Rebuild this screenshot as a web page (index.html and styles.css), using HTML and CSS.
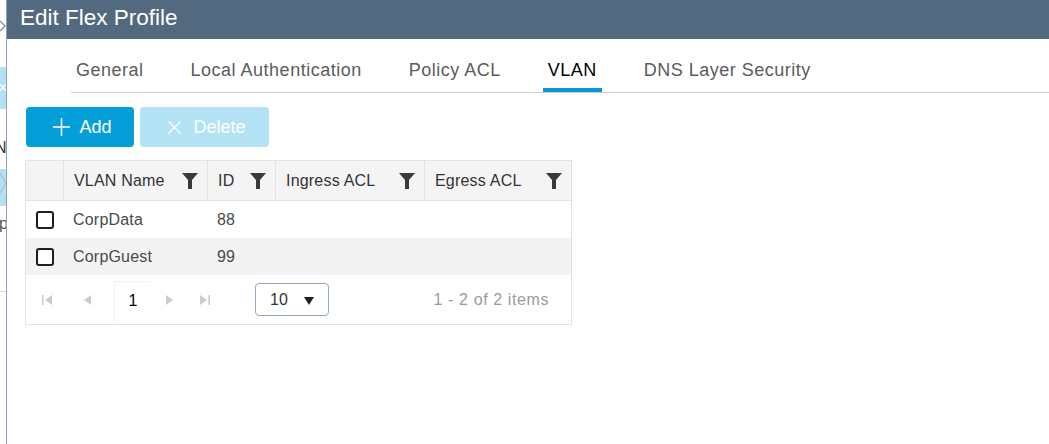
FILE: index.html
```html
<!DOCTYPE html>
<html lang="en">
<head>
<meta charset="utf-8">
<title>Edit Flex Profile</title>
<link rel="stylesheet" href="styles.css">
</head>
<body>
<div class="screen">
  <aside class="backdrop">
    <svg class="bd-chev" width="6" height="12" viewBox="0 0 6 12"><polyline points="0,1 5,6 0,11" fill="none" stroke="#8596ad" stroke-width="1.5"/></svg>
    <div class="bd-box bd-box1"><svg width="6" height="8" viewBox="0 0 6 8"><path d="M0 0 L6 7 M6 0 L0 7" stroke="#fff" stroke-width="1.2" fill="none"/></svg></div>
    <div class="bd-n">N</div>
    <div class="bd-box bd-box2"><svg width="6" height="37" viewBox="0 0 6 37"><polyline points="0,4 6,14 0,24" fill="none" stroke="#a9bccb" stroke-width="1.2"/></svg></div>
    <div class="bd-p">p</div>
    <div class="bd-line"></div>
  </aside>

  <main class="modal">
    <header class="modal-head">Edit Flex Profile</header>
    <div class="modal-body">
      <nav class="tabs">
        <span class="tab">General</span>
        <span class="tab">Local Authentication</span>
        <span class="tab">Policy ACL</span>
        <span class="tab tab-active">VLAN</span>
        <span class="tab">DNS Layer Security</span>
      </nav>

      <div class="toolbar">
        <button class="btn btn-add" type="button">
          <svg class="btn-icon-plus" width="17" height="18" viewBox="0 0 17 18"><path d="M8.5 0 V18 M0 9 H17" stroke="#fff" stroke-width="1.5" fill="none"/></svg>
          <span>Add</span>
        </button>
        <button class="btn btn-delete" type="button">
          <svg class="btn-icon-x" width="13" height="13" viewBox="0 0 13 13"><path d="M0.5 0.5 L12.5 12.5 M12.5 0.5 L0.5 12.5" stroke="#fff" stroke-width="1.4" fill="none"/></svg>
          <span>Delete</span>
        </button>
      </div>

      <div class="grid">
        <div class="grid-row grid-head">
          <div class="cell cell-check"></div>
          <div class="cell"><span>VLAN Name</span><svg class="funnel" width="16" height="16" viewBox="0 0 16 16"><polygon points="0,0 16,0 10,7 10,16 6,16 6,7"/></svg></div>
          <div class="cell"><span>ID</span><svg class="funnel" width="16" height="16" viewBox="0 0 16 16"><polygon points="0,0 16,0 10,7 10,16 6,16 6,7"/></svg></div>
          <div class="cell"><span>Ingress ACL</span><svg class="funnel" width="16" height="16" viewBox="0 0 16 16"><polygon points="0,0 16,0 10,7 10,16 6,16 6,7"/></svg></div>
          <div class="cell"><span>Egress ACL</span><svg class="funnel" width="16" height="16" viewBox="0 0 16 16"><polygon points="0,0 16,0 10,7 10,16 6,16 6,7"/></svg></div>
        </div>
        <div class="grid-row">
          <div class="cell cell-check"><span class="checkbox"></span></div>
          <div class="cell">CorpData</div>
          <div class="cell">88</div>
          <div class="cell"></div>
          <div class="cell"></div>
        </div>
        <div class="grid-row grid-row-alt">
          <div class="cell cell-check"><span class="checkbox"></span></div>
          <div class="cell">CorpGuest</div>
          <div class="cell">99</div>
          <div class="cell"></div>
          <div class="cell"></div>
        </div>
        <div class="pager">
          <span class="pg-btn pg-first"><svg width="10" height="10" viewBox="0 0 10 10"><rect x="0" y="0" width="1.6" height="10"/><polygon points="10,0 10,10 3,5"/></svg></span>
          <span class="pg-btn pg-prev"><svg width="7" height="10" viewBox="0 0 7 10"><polygon points="7,0 7,10 0,5"/></svg></span>
          <span class="pg-page">1</span>
          <span class="pg-btn pg-next"><svg width="7" height="10" viewBox="0 0 7 10"><polygon points="0,0 0,10 7,5"/></svg></span>
          <span class="pg-btn pg-last"><svg width="10" height="10" viewBox="0 0 10 10"><polygon points="0,0 0,10 7,5"/><rect x="8.4" y="0" width="1.6" height="10"/></svg></span>
          <span class="pg-size"><span>10</span><svg width="10" height="8" viewBox="0 0 10 8"><polygon points="0,0 10,0 5,8"/></svg></span>
          <span class="pg-info">1 - 2 of 2 items</span>
        </div>
      </div>
    </div>
  </main>
</div>
</body>
</html>
```

FILE: styles.css
```css
* { box-sizing: border-box; }

html, body {
  margin: 0;
  padding: 0;
}

body {
  font-family: "Liberation Sans", Arial, sans-serif;
  background: #fff;
  width: 1049px;
  height: 444px;
  overflow: hidden;
}

.screen {
  display: flex;
  height: 444px;
}

/* page behind the modal */
.backdrop {
  width: 7px;
  flex: none;
  border-right: 1px solid #8aa1bf;
  display: flex;
  flex-direction: column;
  overflow: hidden;
  background: #fff;
}

.bd-chev {
  display: block;
  margin-top: 20px;
  flex: none;
}

.bd-box {
  width: 6px;
  flex: none;
  background: #b3e0f3;
  display: flex;
  align-items: center;
}

.bd-box1 {
  margin-top: 35px;
  height: 42px;
}

.bd-n {
  margin-top: 31px;
  margin-left: -5px;
  font-size: 16px;
  line-height: 16px;
  color: #333;
}

.bd-box2 {
  margin-top: 13px;
  height: 37px;
}

.bd-p {
  margin-top: 10px;
  margin-left: -1px;
  font-size: 16px;
  line-height: 16px;
  color: #555;
}

.bd-line {
  margin-top: 59px;
  height: 1px;
  background: #dcdcdc;
  flex: none;
}

/* modal */
.modal {
  flex: 1;
  display: flex;
  flex-direction: column;
  min-width: 0;
}

.modal-head {
  height: 39px;
  flex: none;
  background: #52697f;
  color: #fff;
  font-size: 22.5px;
  line-height: 36px;
  padding-left: 13px;
}

.modal-body {
  padding-left: 18px;
}

.tabs {
  display: flex;
  margin-top: 20px;
  margin-left: 46px;
  border-bottom: 1px solid #cfcfcf;
}

.tab {
  font-size: 18px;
  line-height: 22px;
  color: #5b5b5e;
  padding: 0 5px 7px;
  border-bottom: 4px solid transparent;
  margin-right: 37px;
  letter-spacing: 0.5px;
}

.tab-active {
  color: #000;
  border-bottom-color: #0a96d0;
}

.toolbar {
  display: flex;
  gap: 6px;
  margin-top: 14px;
  padding-left: 1px;
}

.btn {
  height: 40px;
  border: none;
  border-radius: 4px;
  color: #fff;
  font-family: inherit;
  font-size: 18px;
  display: inline-flex;
  align-items: center;
  justify-content: center;
  padding: 0 0 0 5px;
}

.btn-add {
  width: 108px;
  background: #049fd9;
  gap: 9px;
}

.btn-delete {
  width: 129px;
  background: #b3e2f4;
  gap: 12px;
}

/* grid */
.grid {
  margin-top: 13px;
  width: 547px;
  border: 1px solid #e3e3e3;
}

.grid-row {
  display: grid;
  grid-template-columns: 37px 144px 68px 149px 147px;
  height: 37px;
  font-size: 16px;
  color: #4a4a4a;
  letter-spacing: 0.2px;
}

.grid-row-alt {
  background: #f3f3f3;
}

.grid-head {
  height: 40px;
  background: #f4f4f4;
  border-bottom: 1px solid #e3e3e3;
  color: #333;
}

.cell {
  display: flex;
  align-items: center;
  padding-left: 10px;
}

.grid-head .cell {
  justify-content: space-between;
  padding-right: 9px;
  border-left: 1px solid #e3e3e3;
}

.grid-head .cell-check {
  border-left: none;
}

.grid-row .cell-check {
  padding-left: 10px;
}

.funnel {
  fill: #3a3a3a;
  flex: none;
}

.checkbox {
  width: 18px;
  height: 18px;
  border: 2px solid #1e1e1e;
  border-radius: 3px;
  background: #fff;
}

/* pager */
.pager {
  height: 49px;
  display: flex;
  align-items: center;
  padding-left: 3px;
  font-size: 16px;
}

.pg-btn {
  width: 36px;
  height: 40px;
  display: flex;
  align-items: center;
  justify-content: center;
  fill: #cccccc;
}

.pg-prev {
  margin-left: 4px;
  margin-right: 9px;
}

.pg-page {
  width: 37px;
  height: 40px;
  display: flex;
  align-items: center;
  justify-content: center;
  color: #000;
  border-top: 1px solid #f2f2f2;
  border-left: 1px solid #f2f2f2;
  margin-top: 2px;
}

.pg-size {
  margin-left: 32px;
  width: 74px;
  height: 33px;
  border: 1px solid #8ea9c1;
  border-radius: 4px;
  display: flex;
  align-items: center;
  justify-content: space-between;
  padding: 0 14px 0 14px;
  color: #333;
  fill: #222;
}

.pg-size svg {
  margin-top: 2px;
}

.pg-info {
  margin-left: auto;
  padding-right: 22px;
  color: #9b9b9b;
  letter-spacing: 0.6px;
}
```
